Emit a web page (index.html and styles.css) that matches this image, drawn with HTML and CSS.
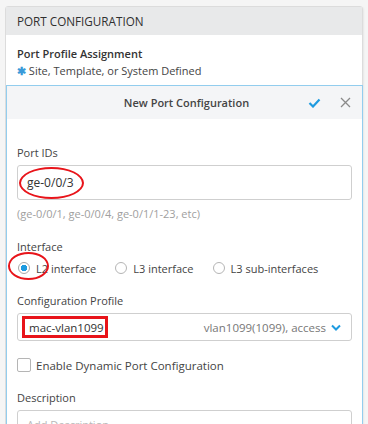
FILE: index.html
```html
<!DOCTYPE html>
<html lang="en">
<head>
  <meta charset="UTF-8">
  <title>Port Configuration</title>
  <link rel="stylesheet" href="styles.css">
</head>
<body>

<div class="card">
  <div class="card-head">PORT CONFIGURATION</div>

  <div class="assign">
    <div class="assign-title">Port Profile Assignment</div>
    <div class="assign-note"><span class="star">&#10033;</span> Site, Template, or System Defined</div>
  </div>

  <div class="panel">
    <div class="panel-head">
      <span class="panel-title">New Port Configuration</span>
      <svg class="icon-check" width="13" height="10" viewBox="0 0 13 10">
        <path d="M1.5 5 L5 8.5 L11.5 1.5" fill="none" stroke="#1e9be0" stroke-width="2.2"/>
      </svg>
      <svg class="icon-close" width="11" height="11" viewBox="0 0 11 11">
        <path d="M1 1 L10 10 M10 1 L1 10" fill="none" stroke="#8a8a8a" stroke-width="1.3"/>
      </svg>
    </div>

    <div class="panel-body">
      <div class="label first">Port IDs</div>
      <div class="field">
        <div class="input tall">ge-0/0/3</div>
        <span class="mark mark-ports"></span>
      </div>
      <div class="hint">(ge-0/0/1, ge-0/0/4, ge-0/1/1-23, etc)</div>

      <div class="label">Interface</div>
      <div class="radios">
        <span class="radio checked"></span><span class="radio-text">L2 interface</span>
        <span class="radio"></span><span class="radio-text">L3 interface</span>
        <span class="radio"></span><span class="radio-text">L3 sub-interfaces</span>
        <span class="mark mark-radio"></span>
      </div>

      <div class="label">Configuration Profile</div>
      <div class="field">
        <div class="select">
          <span class="select-value">mac-vlan1099</span>
          <span class="select-info">vlan1099(1099), access</span>
          <svg class="chevron" width="10" height="7" viewBox="0 0 10 7">
            <path d="M1 1.5 L5 5.5 L9 1.5" fill="none" stroke="#1e9be0" stroke-width="2"/>
          </svg>
        </div>
        <span class="mark mark-profile"></span>
      </div>

      <div class="check-row">
        <span class="checkbox"></span>
        <span>Enable Dynamic Port Configuration</span>
      </div>

      <div class="label">Description</div>
      <div class="input placeholder">Add Description</div>
    </div>
  </div>
</div>

</body>
</html>
```

FILE: styles.css
```css
body {
  margin: 0;
  padding: 6px 5px 0 5px;
  background: #f5f5f5;
  font-family: 'Open Sans', sans-serif;
  font-size: 11px;
  color: #333333;
  overflow: hidden;
}
.card {
  width: 356px;
  border: 1px solid #dcdcdc;
  border-radius: 3px 3px 0 0;
  background: #ffffff;
  box-shadow: 1px 1px 2px rgba(0, 0, 0, 0.06);
}
.card-head {
  height: 28px;
  line-height: 28px;
  padding-left: 11px;
  background: #e8e9ea;
  font-size: 11.7px;
  color: #2f2f2f;
}
.assign {
  padding: 11px 11px 6px 11px;
}
.assign-title {
  line-height: 16px;
  font-weight: 600;
}
.assign-note {
  line-height: 16px;
  margin-top: 1px;
  color: #444444;
}
.star {
  color: #3a9ad9;
  font-size: 11px;
  font-weight: 700;
}
.panel {
  border: 1px solid #92cdee;
  border-bottom: none;
  margin: 0 -1px 0 0;
  background: #ffffff;
}
.panel-head {
  position: relative;
  height: 33px;
  line-height: 33px;
  background: #f4f5f7;
  text-align: center;
}
.panel-title {
  font-weight: 600;
  color: #444444;
  margin-left: 4px;
}
.icon-check {
  position: absolute;
  left: 301px;
  top: 12px;
}
.icon-close {
  position: absolute;
  left: 333px;
  top: 11px;
}
.panel-body {
  padding: 26px 10px 0 10px;
}
.label {
  line-height: 16px;
  margin-top: 17px;
  margin-bottom: 4px;
  color: #444444;
}
.label.first {
  margin-top: 0;
}
.field {
  position: relative;
}
.input {
  height: 28px;
  line-height: 28px;
  border: 1px solid #cfcfcf;
  border-radius: 3px;
  padding: 0 9px;
  font-size: 12px;
  color: #333333;
}
.input.tall {
  height: 33px;
  line-height: 33px;
}
.input.placeholder {
  color: #b8b8b8;
  font-size: 11px;
}
.hint {
  line-height: 16px;
  margin-top: 6px;
  color: #a0a0a0;
}
.radios {
  position: relative;
  display: flex;
  align-items: center;
  height: 16px;
  margin-top: 5px;
  font-size: 11px;
  color: #444444;
}
.radio {
  width: 12px;
  height: 12px;
  border: 1px solid #b5b5b5;
  border-radius: 50%;
  box-sizing: border-box;
  margin-left: 1px;
  margin-right: 6px;
}
.radio.checked {
  border-color: #a8a8a8;
  background: radial-gradient(circle, #1e9be0 0, #1e9be0 3px, #ffffff 3.5px);
}
.radio-text {
  margin-right: 18px;
}
.select {
  display: flex;
  align-items: center;
  height: 26px;
  border: 1px solid #cfcfcf;
  border-radius: 3px;
  padding: 0 10px 0 11px;
  font-size: 11.5px;
}
.select-value {
  flex: 1;
  color: #333333;
}
.select-info {
  color: #777777;
  margin-right: 5px;
}
.check-row {
  display: flex;
  align-items: center;
  margin-top: 16px;
  height: 16px;
  font-size: 11.5px;
  color: #444444;
}
.checkbox {
  width: 14px;
  height: 14px;
  box-sizing: border-box;
  border: 1px solid #b5b5b5;
  border-radius: 2px;
  margin-right: 5px;
}
.mark {
  position: absolute;
  box-sizing: border-box;
  border: 2.5px solid #e8141a;
}
.mark-ports {
  left: 2px;
  top: 2px;
  width: 65px;
  height: 32px;
  border-radius: 50%;
}
.mark-radio {
  left: -9px;
  top: -8px;
  width: 41px;
  height: 28px;
  border-radius: 50%;
}
.mark-profile {
  left: 5px;
  top: 3px;
  width: 86px;
  height: 22px;
  border-width: 3px;
}
```
